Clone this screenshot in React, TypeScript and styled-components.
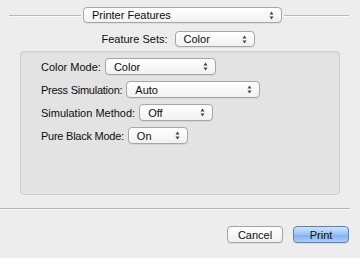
import React from "react";
import styled, { createGlobalStyle } from "styled-components";

const Global = createGlobalStyle`
  html, body { margin: 0; padding: 0; }
  body {
    background: #ececec;
    font-family: "Liberation Sans", Arial, sans-serif;
    font-size: 11px;
    color: #0d0d0d;
  }
`;

const Window = styled.div`
  width: 360px;
  height: 258px;
  box-sizing: border-box;
  background: #ededed;
  display: flex;
  flex-direction: column;
  overflow: hidden;
`;

const Header = styled.div`
  display: flex;
  align-items: center;
  gap: 2px;
  padding: 7px 11px 0 9px;
  height: 16px;
`;

const Rule = styled.div<{ $w?: number }>`
  flex: ${(p) => (p.$w ? `0 0 ${p.$w}px` : "1")};
  height: 1px;
  background: #b9b9b9;
  box-shadow: 0 1px 0 #fafafa;
`;

const PopupBox = styled.div<{ $w: number; $h?: number }>`
  width: ${(p) => p.$w}px;
  height: ${(p) => p.$h ?? 16}px;
  box-sizing: border-box;
  display: flex;
  align-items: center;
  justify-content: space-between;
  padding: 0 7px 0 8px;
  border: 1px solid #a6a6a6;
  border-radius: 4px;
  background: linear-gradient(#ffffff, #f1f1f1);
  box-shadow: 0 1px 0 rgba(0, 0, 0, 0.06);
  font-size: 11px;
  color: #0d0d0d;
  flex: none;
`;

const Arrows = () => (
  <svg width="5" height="9" viewBox="0 0 5 9">
    <path d="M2.5 0.5 L4.5 3.5 L0.5 3.5 Z" fill="#444" />
    <path d="M2.5 8.5 L4.5 5.5 L0.5 5.5 Z" fill="#444" />
  </svg>
);

const Popup = ({ w, h, children }: { w: number; h?: number; children: React.ReactNode }) => (
  <PopupBox $w={w} $h={h}>
    <span>{children}</span>
    <Arrows />
  </PopupBox>
);

const CenterRow = styled.div`
  display: flex;
  align-items: center;
  justify-content: center;
  gap: 7px;
  margin-top: 8px;
  padding-right: 4px;
`;

const Panel = styled.div`
  margin: 4px 20px 0 20px;
  height: 144px;
  box-sizing: border-box;
  background: #e3e3e3;
  border: 1px solid #cdcdcd;
  border-radius: 4px;
  box-shadow: inset 0 1px 1px rgba(0, 0, 0, 0.04);
  padding: 6px 0 0 20px;
  display: flex;
  flex-direction: column;
  gap: 6px;
`;

const Row = styled.div`
  display: flex;
  align-items: center;
  gap: 4px;
  height: 17px;
`;

const Label = styled.span<{ $tight?: boolean }>`
  white-space: nowrap;
  letter-spacing: ${(p) => (p.$tight ? "-0.25px" : "0")};
`;

const Divider = styled.div`
  margin: 13px 10px 0 0;
  height: 1px;
  background: #b5b5b5;
  box-shadow: 0 1px 0 #f8f8f8;
`;

const Buttons = styled.div`
  display: flex;
  justify-content: flex-end;
  gap: 10px;
  margin-top: 17px;
  padding-right: 11px;
`;

const Button = styled.button<{ $primary?: boolean }>`
  width: 56px;
  height: 17px;
  box-sizing: border-box;
  padding: 0;
  font-family: "Liberation Sans", Arial, sans-serif;
  font-size: 11px;
  color: #0d0d0d;
  border-radius: 4px;
  border: 1px solid ${(p) => (p.$primary ? "#5b82bd" : "#a4a4a4")};
  background: ${(p) =>
    p.$primary
      ? "linear-gradient(#cfe2fb 0%, #9cc3f3 50%, #7eb0ef 51%, #a9cdf7 100%)"
      : "linear-gradient(#ffffff, #f0f0f0)"};
  box-shadow: 0 1px 0 rgba(0, 0, 0, 0.08);
`;

export default function App() {
  return (
    <>
      <Global />
      <Window>
        <Header>
          <Rule $w={72} />
          <Popup w={199}>Printer Features</Popup>
          <Rule />
        </Header>
        <CenterRow>
          <Label>Feature Sets:</Label>
          <Popup w={80}>Color</Popup>
        </CenterRow>
        <Panel>
          <Row>
            <Label>Color Mode:</Label>
            <Popup w={111} h={17}>Color</Popup>
          </Row>
          <Row>
            <Label $tight>Press Simulation:</Label>
            <Popup w={134} h={17}>Auto</Popup>
          </Row>
          <Row>
            <Label>Simulation Method:</Label>
            <Popup w={74} h={17}>Off</Popup>
          </Row>
          <Row>
            <Label $tight>Pure Black Mode:</Label>
            <Popup w={60} h={17}>On</Popup>
          </Row>
        </Panel>
        <Divider />
        <Buttons>
          <Button>Cancel</Button>
          <Button $primary>Print</Button>
        </Buttons>
      </Window>
    </>
  );
}
